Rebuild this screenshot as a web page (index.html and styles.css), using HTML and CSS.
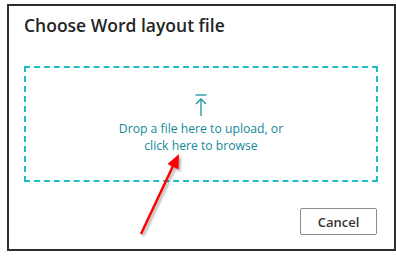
FILE: index.html
```html
<!DOCTYPE html>
<html lang="en">
<head>
    <meta charset="UTF-8">
    <meta name="viewport" content="width=device-width, initial-scale=1.0">
    <title>Choose Word layout file</title>
    <link rel="stylesheet" href="styles.css">
</head>
<body>
    <div class="dialog">
        <h1 class="dialog-title">Choose Word layout file</h1>

        <div class="drop-zone">
            <svg class="upload-icon" width="12" height="22" viewBox="0 0 12 22">
                <line x1="0.5" y1="1" x2="11.5" y2="1" />
                <line x1="6" y1="5" x2="6" y2="22" />
                <polyline points="1,10 6,5 11,10" />
            </svg>
            <p class="drop-text">Drop a file here to upload, or</p>
            <p class="drop-text">click here to browse</p>
        </div>

        <div class="dialog-footer">
            <button type="button" class="cancel-btn">Cancel</button>
        </div>
    </div>

    <!-- annotation arrow drawn over the screenshot -->
    <svg class="pointer-arrow" width="396" height="257" viewBox="0 0 396 257">
        <line x1="141" y1="234" x2="173" y2="166" />
        <polygon points="179,154 167.5,164 178.5,169.5" />
    </svg>
</body>
</html>
```

FILE: styles.css
```css
/* Global Styles */
body {
    font-family: 'Open Sans', 'Noto Sans', sans-serif;
    background-color: #fff;
    margin: 0;
    padding: 0;
    position: relative;
    width: 396px;
    height: 257px;
    overflow: hidden;
}

.dialog {
    box-sizing: border-box;
    width: 389px;
    height: 247px;
    margin: 4px 0 0 7px;
    padding: 6px 16px 0 15px;
    border: 2px solid #2e2e2e;
    display: flex;
    flex-direction: column;
}

.dialog-title {
    margin: 0 0 27px;
    font-size: 17.5px;
    line-height: 27px;
    font-weight: 600;
    color: #252525;
}

/* Drop area */
.drop-zone {
    height: 116px;
    box-sizing: border-box;
    border: 2px dashed #1fbcc6;
    display: flex;
    flex-direction: column;
    align-items: center;
    justify-content: center;
}

.upload-icon {
    fill: none;
    stroke: #1b8fa0;
    stroke-width: 1.3;
    margin-bottom: 4px;
}

.drop-text {
    margin: 0;
    font-size: 12.2px;
    line-height: 17px;
    font-weight: 500;
    color: #15899a;
    text-align: center;
}

/* Footer */
.dialog-footer {
    display: flex;
    justify-content: flex-end;
    padding-top: 26px;
}

.cancel-btn {
    width: 77px;
    height: 27px;
    margin-right: 1px;
    padding: 0;
    background-color: #fff;
    border: 1px solid #8c8c8c;
    border-radius: 2px;
    font-family: 'Open Sans', 'Noto Sans', sans-serif;
    font-size: 13px;
    font-weight: 600;
    color: #333;
}

/* Annotation */
.pointer-arrow {
    position: absolute;
    top: 0;
    left: 0;
    pointer-events: none;
    filter: drop-shadow(2px 2px 1px rgba(0, 0, 0, 0.3));
}

.pointer-arrow line {
    stroke: #ff0000;
    stroke-width: 2.5;
}

.pointer-arrow polygon {
    fill: #ff0000;
}
```
